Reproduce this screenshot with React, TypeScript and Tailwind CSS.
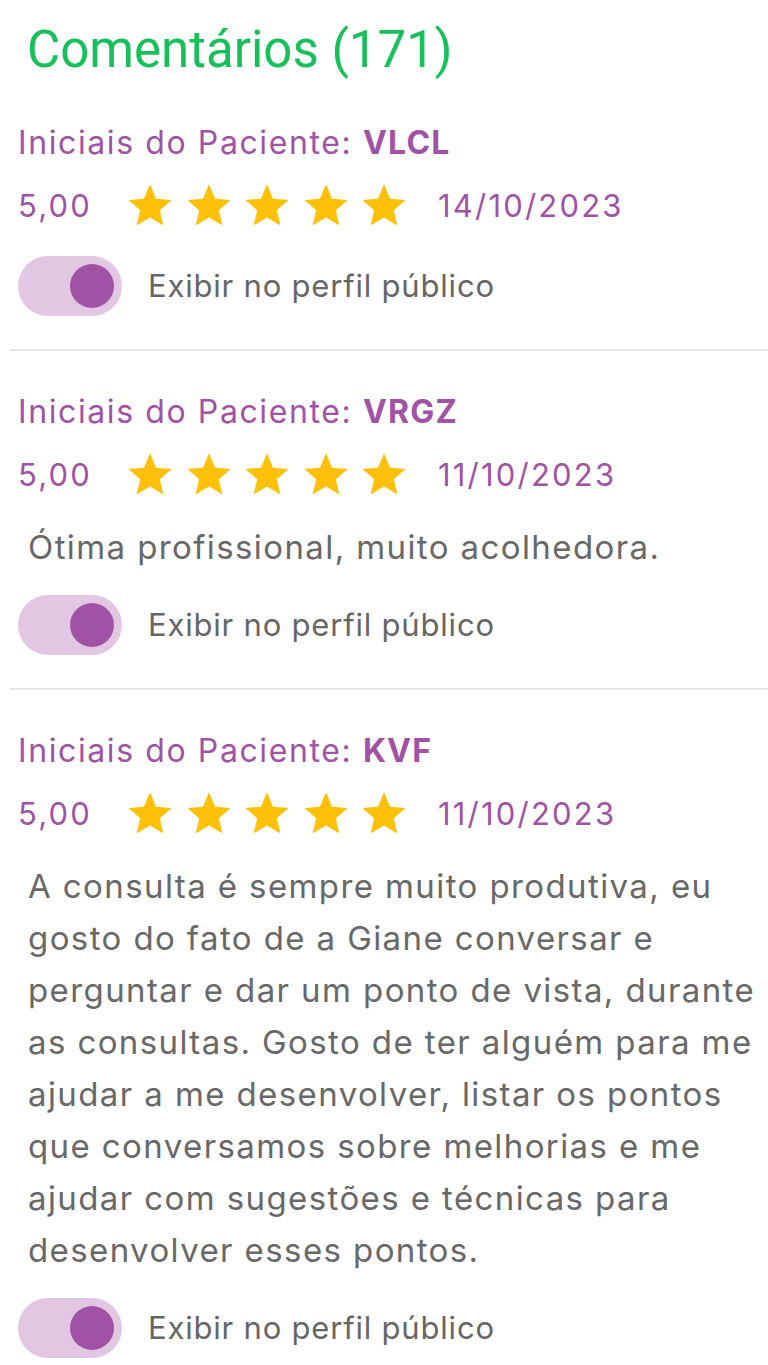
import { MdStar } from "react-icons/md";

type Review = {
  initials: string;
  date: string;
  comment?: string[];
};

// lines kept as in the app so the wrapping matches
const reviews: Review[] = [
  { initials: "VLCL", date: "14/10/2023" },
  { initials: "VRGZ", date: "11/10/2023", comment: ["Ótima profissional, muito acolhedora."] },
  {
    initials: "KVF",
    date: "11/10/2023",
    comment: [
      "A consulta é sempre muito produtiva, eu",
      "gosto do fato de a Giane conversar e",
      "perguntar e dar um ponto de vista, durante",
      "as consultas. Gosto de ter alguém para me",
      "ajudar a me desenvolver, listar os pontos",
      "que conversamos sobre melhorias e me",
      "ajudar com sugestões e técnicas para",
      "desenvolver esses pontos.",
    ],
  },
];

const Toggle: React.FC = () => (
  <div className="w-[104px] h-[60px] rounded-full bg-[#e2c7e3] flex items-center justify-end pr-[8px] shrink-0">
    <div className="w-[44px] h-[44px] rounded-full bg-[#a052a5]" />
  </div>
);

const ReviewItem: React.FC<{ review: Review; first: boolean }> = ({ review, first }) => (
  <div className={first ? "pt-[43px]" : "pt-[41px]"}>
    <div className="pl-[8px] h-[40px] leading-[40px] text-[32px] tracking-[1.6px] text-[#a052a5] whitespace-nowrap">
      Iniciais do Paciente: <span className="font-bold tracking-[1.2px]">{review.initials}</span>
    </div>
    <div className="pl-[8px] mt-[15px] h-[56px] flex items-center text-[31px] tracking-[2.2px] text-[#a052a5]">
      <span className="w-[106px]">5,00</span>
      <div className="flex gap-[6.5px]">
        {[0, 1, 2, 3, 4].map((i) => (
          <MdStar key={i} size={52} className="text-[#ffc107]" />
        ))}
      </div>
      <span className="ml-[28px]">{review.date}</span>
    </div>
    {review.comment && (
      <p className="pl-[18px] mt-[18px] text-[33px] tracking-[1.4px] leading-[52px] text-[#686868]">
        {review.comment.map((line) => (
          <span key={line} className="block whitespace-nowrap">
            {line}
          </span>
        ))}
      </p>
    )}
    <div className="pl-[8px] mt-[22px] flex items-center gap-[26px]">
      <Toggle />
      <span className="text-[31px] tracking-[0.8px] text-[#666666]">Exibir no perfil público</span>
    </div>
  </div>
);

export default function App() {
  return (
    <div className="w-[768px] min-h-[1365px] bg-white font-['Inter',sans-serif] overflow-hidden">
      <h1 className="pt-[20px] pl-[27px] h-[80px] text-[51px] leading-[60px] text-[#17c05b] font-['Roboto',sans-serif]">
        Comentários (171)
      </h1>
      <div className="pl-[10px]">
        {reviews.map((r, i) => (
          <div key={r.initials}>
            {i > 0 && <div className="h-[2px] bg-[#e6e6e6] mt-[33px]" />}
            <ReviewItem review={r} first={i === 0} />
          </div>
        ))}
      </div>
    </div>
  );
}
